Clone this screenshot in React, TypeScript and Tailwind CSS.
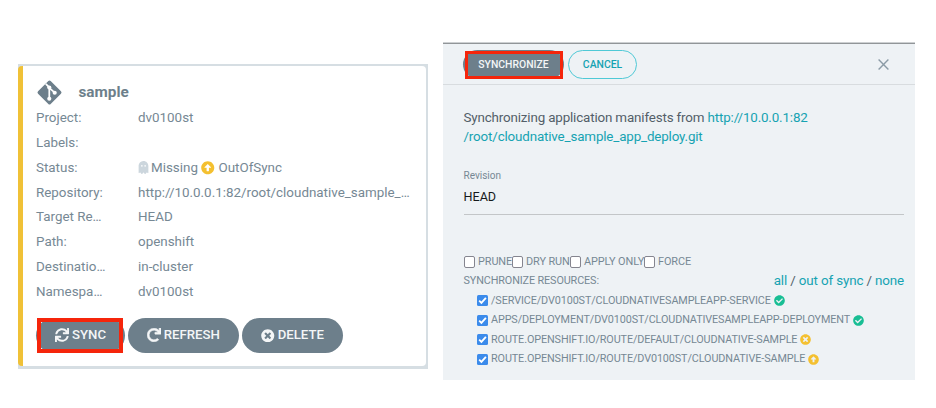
import React from 'react';
import {
  FaArrowAltCircleUp,
  FaCheckCircle,
  FaGhost,
  FaRedo,
  FaSync,
  FaTimesCircle,
} from 'react-icons/fa';

function GitMark() {
  return (
    <svg viewBox="0 0 26 26" className="h-[27px] w-[27px]" fill="none">
      <rect x="4.4" y="4.4" width="17.2" height="17.2" rx="1.6" fill="#6d7f8b" transform="rotate(45 13 13)" />
      <path d="M9.4 4.6 12.8 8V19M12.8 8.6 18 13.2" stroke="white" strokeWidth="1.7" />
      <circle cx="12.8" cy="8.2" r="2" fill="white" />
      <circle cx="18" cy="13.2" r="2" fill="white" />
      <circle cx="12.8" cy="19" r="2" fill="white" />
    </svg>
  );
}

function Row({ label, children }: { label: string; children?: React.ReactNode }) {
  return (
    <div className="flex h-[24.75px] items-center whitespace-nowrap text-[13.4px]">
      <div className="w-[102px] shrink-0">{label}</div>
      <div className="flex items-center">{children}</div>
    </div>
  );
}

function PillButton({ className, children }: { className: string; children: React.ReactNode }) {
  return (
    <div
      className={`flex h-[35.5px] items-center justify-center rounded-full bg-[#6d7f8b] text-[13.2px] font-medium whitespace-nowrap text-[#f4f6f7] ${className}`}
    >
      {children}
    </div>
  );
}

function AppCard() {
  return (
    <div className="mt-[64px] ml-[18px] h-[305px] w-[410px] shrink-0 bg-[#d6dee3] pt-[2px] pr-[2px] pb-[3px]">
      <div className="h-[300px] rounded-[4px] border-l-[5px] border-[#f0c137] bg-white pl-[13px] text-[#768894]">
        <div className="flex h-[39px] items-center pt-[13px]">
          <GitMark />
          <span className="ml-[15.5px] text-[15.3px] font-bold text-[#6d7f8b]">sample</span>
        </div>
        <div className="mt-[1px]">
          <Row label="Project:">dv0100st</Row>
          <Row label="Labels:" />
          <Row label="Status:">
            <FaGhost className="mr-[2px] h-[13px] w-[11px] text-[#ccd6dd]" />
            Missing
            <FaArrowAltCircleUp className="mr-[3.5px] ml-[3.5px] h-[13.5px] w-[13.5px] text-[#f4c030]" />
            OutOfSync
          </Row>
          <Row label="Repository:">http://10.0.0.1:82/root/cloudnative_sample_…</Row>
          <Row label="Target Re…">HEAD</Row>
          <Row label="Path:">openshift</Row>
          <Row label="Destinatio…">in-cluster</Row>
          <Row label="Namespa…">dv0100st</Row>
        </div>
        <div className="mt-[13.5px] flex gap-[3px]">
          <div className="relative">
            <PillButton className="w-[89px]">
              <FaSync className="mr-[3px] h-[14px] w-[14px]" />
              SYNC
            </PillButton>
            <div className="absolute top-[0.5px] left-[1px] h-[35px] w-[86px] border-4 border-[#f5250b]" />
          </div>
          <PillButton className="w-[111px]">
            <FaRedo className="mr-[2.5px] h-[14px] w-[14px]" stroke="#f4f6f7" strokeWidth={20} />
            REFRESH
          </PillButton>
          <PillButton className="w-[101px]">
            <FaTimesCircle className="mr-[3px] h-[13.5px] w-[13.5px]" />
            DELETE
          </PillButton>
        </div>
      </div>
    </div>
  );
}

function Option({ label, className }: { label: string; className: string }) {
  return (
    <div className={`flex items-center whitespace-nowrap ${className}`}>
      <span className="mr-[3px] h-[11.5px] w-[11.5px] shrink-0 rounded-[2px] border-[1.5px] border-[#85858f] bg-white" />
      {label}
    </div>
  );
}

function Resource({ label, children }: { label: string; children: React.ReactNode }) {
  return (
    <div className="flex h-[19.6px] items-center whitespace-nowrap">
      <span className="mr-[3.5px] flex h-[11px] w-[11px] shrink-0 items-center justify-center rounded-[1.5px] bg-[#3b8beb]">
        <svg viewBox="0 0 11 11" className="h-[11px] w-[11px]" fill="none" stroke="white" strokeWidth="1.8">
          <path d="M2.2 5.7 4.4 7.9 8.9 2.8" />
        </svg>
      </span>
      <span className="mr-[3px]">{label}</span>
      {children}
    </div>
  );
}

function SyncPanel() {
  return (
    <div className="mt-[42px] ml-[15px] h-[338px] w-[472px] shrink-0 border-t border-[#cdd0d2] bg-[#eef2f5] text-[#768894]">
      <div className="flex h-[42px] items-center border-t border-b border-t-[#919598] border-b-[#d8dcdf] pt-[1px] pl-[20px] text-[10.4px] font-medium">
        <div className="relative">
          <div className="flex h-[29px] w-[101px] items-center justify-center rounded-full bg-[#6d7f8b] pt-[1px] text-[#f4f6f7]">
            SYNCHRONIZE
          </div>
          <div className="absolute top-[1px] left-[2px] h-[28px] w-[98px] border-[3px] border-[#f5250b]" />
        </div>
        <div className="ml-[4px] flex h-[29px] w-[69px] items-center justify-center rounded-full border border-[#4fc9d6] pt-[1px] text-[#16a3b2]">
          CANCEL
        </div>
        <svg viewBox="0 0 11 11" className="ml-[241px] h-[11px] w-[11px]" fill="none" stroke="#8b9ba6" strokeWidth="1.4">
          <path d="M.6.6 10.4 10.4M10.4.6.6 10.4" />
        </svg>
      </div>
      <div className="pr-[11px] pl-[20.5px]">
        <div className="mt-[23px] text-[13.4px] leading-[19px] tracking-[-0.16px] whitespace-nowrap text-[#535f69]">
          Synchronizing application manifests from <span className="text-[#16a3b2]">http://10.0.0.1:82</span>
          <br />
          <span className="text-[#16a3b2]">/root/cloudnative_sample_app_deploy.git</span>
        </div>
        <div className="mt-[23px] text-[10px] leading-[14px]">Revision</div>
        <div className="mt-[5px] h-[27px] border-b border-[#c3c6c8] text-[12.6px] leading-[18px] text-[#16191b]">HEAD</div>
        <div className="mt-[38px] flex h-[18px] text-[10.9px] tracking-[-0.1px]">
          <Option label="PRUNE" className="w-[48px]" />
          <Option label="DRY RUN" className="w-[58px]" />
          <Option label="APPLY ONLY" className="w-[74px]" />
          <Option label="FORCE" className="w-[50px]" />
        </div>
        <div className="flex h-[20px] items-center justify-between text-[10.8px] tracking-[-0.11px]">
          <span>SYNCHRONIZE RESOURCES:</span>
          <span className="text-[13.4px] tracking-[-0.14px] whitespace-nowrap text-[#535f69]">
            <span className="text-[#16a3b2]">all</span> / <span className="text-[#16a3b2]">out of sync</span> /{' '}
            <span className="text-[#16a3b2]">none</span>
          </span>
        </div>
        <div className="pl-[13px] text-[10.8px] tracking-[-0.1px]">
          <Resource label="/SERVICE/DV0100ST/CLOUDNATIVESAMPLEAPP-SERVICE">
            <FaCheckCircle className="h-[11px] w-[11px] text-[#18be94]" />
          </Resource>
          <Resource label="APPS/DEPLOYMENT/DV0100ST/CLOUDNATIVESAMPLEAPP-DEPLOYMENT">
            <FaCheckCircle className="h-[11px] w-[11px] text-[#18be94]" />
          </Resource>
          <Resource label="ROUTE.OPENSHIFT.IO/ROUTE/DEFAULT/CLOUDNATIVE-SAMPLE">
            <FaTimesCircle className="h-[11px] w-[11px] text-[#f4c030]" />
          </Resource>
          <Resource label="ROUTE.OPENSHIFT.IO/ROUTE/DV0100ST/CLOUDNATIVE-SAMPLE">
            <FaArrowAltCircleUp className="h-[11px] w-[11px] text-[#f4c030]" />
          </Resource>
        </div>
      </div>
    </div>
  );
}

export default function App() {
  return (
    <div className="flex h-[408px] w-[936px] items-start overflow-hidden bg-white font-['Roboto',sans-serif]">
      <AppCard />
      <SyncPanel />
    </div>
  );
}
